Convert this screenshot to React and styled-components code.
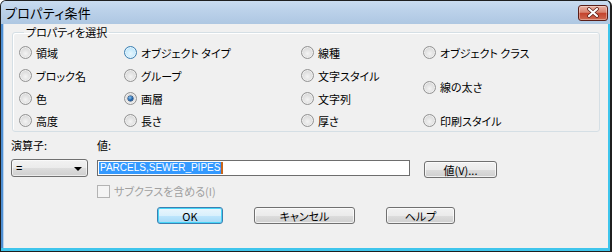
import React from "react";
import styled, { createGlobalStyle, css } from "styled-components";

const Global = createGlobalStyle`
  html, body { margin: 0; padding: 0; background: #ffffff; }
  body { font-family: "Noto Sans CJK JP", "Noto Sans", sans-serif; }
  * { box-sizing: border-box; }
`;

const jp = css`
  font-family: "MS UI Gothic", "Noto Sans CJK JP", sans-serif;
  font-feature-settings: "palt" 1;
`;

const Window = styled.div`
  width: 612px;
  height: 252px;
  border: 1px solid #1f1f1f;
  border-right-width: 2px;
  border-radius: 6px 6px 0 0;
  background: #b9d1ea;
  box-shadow: inset 0 -3px 0 #3ec5ec, inset -3px 0 0 #3ec5ec, inset 2px 0 0 #4f8fd3;
  display: flex;
  flex-direction: column;
  overflow: hidden;
`;

const TitleBar = styled.div`
  height: 23px;
  flex: none;
  display: flex;
  align-items: center;
  justify-content: space-between;
  padding: 0 2px 0 4px;
  background: linear-gradient(#cadcef 0%, #bcd2ea 40%, #aec7e2 100%);
`;

const Title = styled.span`
  ${jp};
  font-size: 13px;
  line-height: 15px;
  color: #000;
  letter-spacing: 0.3px;
`;

const CloseButton = styled.div`
  width: 30px;
  height: 16px;
  border: 1px solid #5a1e18;
  border-radius: 3px;
  background: linear-gradient(#eab2a4 0%, #d9836f 45%, #c4432d 52%, #d06a52 100%);
  box-shadow: inset 0 0 0 1px rgba(255, 255, 255, 0.35);
  display: flex;
  align-items: center;
  justify-content: center;
`;

const Client = styled.div`
  flex: 1;
  margin: 0 2px 3px 3px;
  background: #f0f0f0;
  padding: 2px 0 0 7px;
  display: flex;
  flex-direction: column;
`;

const Group = styled.fieldset`
  margin: 0 0 0 1px;
  width: 588px;
  padding: 0 0 0 6px;
  border: 1px solid #d5dfe5;
  border-radius: 3px;
  box-shadow: inset 1px 1px 0 #ffffff;
`;

const Legend = styled.legend`
  ${jp};
  font-size: 11px;
  line-height: 12px;
  margin-left: 5px;
  padding: 0 2px;
  color: #000;
`;

const RadioGrid = styled.div`
  display: grid;
  grid-template-columns: 105px 177px 122px 1fr;
  height: 90px;
  margin-top: 3px;
`;

const Column = styled.div`
  display: flex;
  flex-direction: column;
  justify-content: ${(p) => (p.$spread ? "space-between" : "flex-start")};
`;

const Option = styled.label`
  ${jp};
  display: flex;
  align-items: center;
  gap: 4px;
  height: 23px;
  font-size: 11px;
  color: #000;
  &:last-child { height: 21px; }
`;

const RadioDot = styled.span`
  width: 13px;
  height: 13px;
  flex: none;
  border-radius: 50%;
  position: relative;
  border: 1px solid ${(p) => (p.$hover ? "#3c7fb1" : "#939393")};
  background: ${(p) =>
    p.$hover
      ? "radial-gradient(circle at 50% 60%, #e8f7fe 0%, #c6e9fb 55%, #9fd5f3 100%)"
      : "radial-gradient(circle at 50% 60%, #f4f4f4 0%, #dedede 55%, #c4c4c4 100%)"};
  box-shadow: inset 0 0 0 1px ${(p) => (p.$hover ? "#e6f5fd" : "#efefef")};
  &::after {
    content: "";
    display: ${(p) => (p.$checked ? "block" : "none")};
    position: absolute;
    left: 3px;
    top: 3px;
    width: 5px;
    height: 5px;
    border-radius: 50%;
    background: radial-gradient(circle at 40% 35%, #8ec7f0 0%, #1a5fa8 55%, #0b2e5e 100%);
    box-shadow: 0 0 0 0.5px #0d3566;
  }
`;

const Lower = styled.div`
  display: flex;
  margin-top: 7px;
`;

const FieldCol = styled.div`
  display: flex;
  flex-direction: column;
  width: ${(p) => p.$w}px;
  margin-left: ${(p) => p.$ml || 0}px;
  padding-top: ${(p) => p.$pt || 0}px;
`;

const Label = styled.div`
  ${jp};
  font-size: 11px;
  line-height: 13px;
  height: 13px;
  color: ${(p) => (p.$disabled ? "#a0a0a0" : "#000")};
`;

const Combo = styled.div`
  margin-top: 7px;
  height: 18px;
  border: 1px solid #707070;
  border-radius: 3px;
  background: linear-gradient(#f2f2f2 0%, #ebebeb 50%, #dddddd 51%, #cfcfcf 100%);
  box-shadow: inset 0 0 0 1px rgba(255, 255, 255, 0.6);
  display: flex;
  align-items: center;
  justify-content: space-between;
  padding: 0 5px 0 4px;
  font-family: "Liberation Sans", sans-serif;
  font-size: 11px;
  color: #000;
`;

const Arrow = styled.span`
  width: 0;
  height: 0;
  border-left: 4px solid transparent;
  border-right: 4px solid transparent;
  border-top: 4px solid #000;
  margin-top: 2px;
`;

const TextBox = styled.div`
  margin-top: 8px;
  height: 16px;
  border: 1px solid #6e6e6e;
  background: #fff;
  display: flex;
  align-items: center;
  padding-left: 1px;
`;

const Selected = styled.span`
  font-family: "Liberation Sans", sans-serif;
  font-size: 10px;
  line-height: 12px;
  background: #3399ff;
  color: #fff;
  padding: 0 1px;
  border-right: 2px solid #c9661b;
`;

const CheckRow = styled.div`
  display: flex;
  align-items: center;
  gap: 4px;
  margin-top: 9px;
`;

const CheckBox = styled.span`
  width: 13px;
  height: 13px;
  border: 1px solid #b3b3b3;
  background: #f4f4f4;
  flex: none;
`;

const Button = styled.div`
  ${jp};
  width: ${(p) => p.$w}px;
  height: 17px;
  border: 1px solid ${(p) => (p.$default ? "#3c7fb1" : "#707070")};
  border-radius: 3px;
  background: ${(p) =>
    p.$default
      ? "linear-gradient(#eaf6fd 0%, #d9f0fc 50%, #bee6fd 51%, #a7d9f5 100%)"
      : "linear-gradient(#f2f2f2 0%, #ebebeb 50%, #dddddd 51%, #cfcfcf 100%)"};
  box-shadow: inset 0 0 0 1px ${(p) => (p.$default ? "#48d6f8" : "rgba(255,255,255,0.7)")};
  display: flex;
  align-items: center;
  justify-content: center;
  font-size: 11px;
  color: #000;
`;

const Footer = styled.div`
  display: flex;
  justify-content: center;
  gap: 31px;
  margin-top: 9px;
  padding-right: 7px;
`;

const leftCol = [
  { t: "領域" },
  { t: "ブロック名" },
  { t: "色" },
  { t: "高度" },
];
const col2 = [
  { t: "オブジェクト タイプ", hover: true },
  { t: "グループ" },
  { t: "画層", checked: true },
  { t: "長さ" },
];
const col3 = [{ t: "線種" }, { t: "文字スタイル" }, { t: "文字列" }, { t: "厚さ" }];
const col4 = [{ t: "オブジェクト クラス" }, { t: "線の太さ" }, { t: "印刷スタイル" }];

function Radios({ items, spread }) {
  return (
    <Column $spread={spread}>
      {items.map((o) => (
        <Option key={o.t}>
          <RadioDot $checked={o.checked} $hover={o.hover} />
          {o.t}
        </Option>
      ))}
    </Column>
  );
}

export default function App() {
  return (
    <>
      <Global />
      <Window>
        <TitleBar>
          <Title>プロパティ条件</Title>
          <CloseButton>
            <svg width="14" height="11" viewBox="0 0 14 11">
              <path d="M3 2 L11 9 M11 2 L3 9" stroke="#5a1e18" strokeWidth="3.6" strokeLinecap="round" />
              <path d="M3 2 L11 9 M11 2 L3 9" stroke="#ffffff" strokeWidth="2.2" strokeLinecap="round" />
            </svg>
          </CloseButton>
        </TitleBar>
        <Client>
          <Group>
            <Legend>プロパティを選択</Legend>
            <RadioGrid>
              <Radios items={leftCol} />
              <Radios items={col2} />
              <Radios items={col3} />
              <Radios items={col4} spread />
            </RadioGrid>
          </Group>
          <Lower>
            <FieldCol $w={77}>
              <Label>演算子:</Label>
              <Combo>
                <span>=</span>
                <Arrow />
              </Combo>
            </FieldCol>
            <FieldCol $w={313} $ml={9}>
              <Label>値:</Label>
              <TextBox>
                <Selected>PARCELS,SEWER_PIPES</Selected>
              </TextBox>
              <CheckRow>
                <CheckBox />
                <Label $disabled>サブクラスを含める(I)</Label>
              </CheckRow>
            </FieldCol>
            <FieldCol $w={73} $ml={14} $pt={22}>
              <Button $w={73}>値(V)...</Button>
            </FieldCol>
          </Lower>
          <Footer>
            <Button $w={66} $default>OK</Button>
            <Button $w={101}>キャンセル</Button>
            <Button $w={69}>ヘルプ</Button>
          </Footer>
        </Client>
      </Window>
    </>
  );
}
